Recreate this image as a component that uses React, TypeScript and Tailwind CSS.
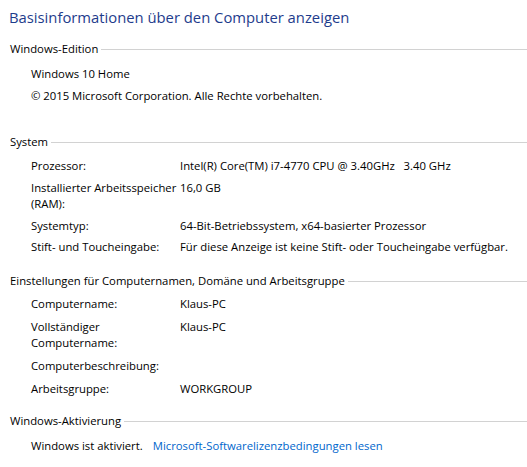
import type { ReactNode } from "react";

const font = { fontFamily: '"Open Sans", "Noto Sans", Arial, sans-serif' };

function SectionHeader({ title, className = "" }: { title: string; className?: string }) {
  return (
    <div className={`flex items-center leading-4 ${className}`}>
      <span className="pl-px">{title}</span>
      <div className="ml-[3px] mt-px h-px flex-1 bg-[#d2d2d2]" />
    </div>
  );
}

function Row({ label, children, className = "" }: { label: ReactNode; children?: ReactNode; className?: string }) {
  return (
    <div className={`grid grid-cols-[149px_1fr] pl-[22px] leading-4 ${className}`}>
      <div>{label}</div>
      <div className="whitespace-nowrap">{children}</div>
    </div>
  );
}

export default function App() {
  return (
    <div className="h-[467px] w-[527px] overflow-hidden bg-white pl-[9px] text-[11.3px] text-black" style={font}>
      <h1 className="mt-[7px] text-[14.8px] leading-5 text-[#1e3c8c]">
        Basisinformationen über den Computer anzeigen
      </h1>

      <SectionHeader title="Windows-Edition" className="mt-[14px]" />
      <div className="mt-[9px] pl-[22px] leading-4">Windows 10 Home</div>
      <div className="mt-[6px] pl-[22px] leading-4">
        © 2015 Microsoft Corporation. Alle Rechte vorbehalten.
      </div>

      <SectionHeader title="System" className="mt-[30px]" />
      <Row label="Prozessor:" className="mt-[8px]">
        Intel(R) Core(TM) i7-4770 CPU @ 3.40GHz&nbsp;&nbsp; 3.40 GHz
      </Row>
      <Row label={<>Installierter Arbeitsspeicher<br />(RAM):</>} className="mt-[6px]">
        16,0 GB
      </Row>
      <Row label="Systemtyp:" className="mt-[6px]">
        64-Bit-Betriebssystem, x64-basierter Prozessor
      </Row>
      <Row label="Stift- und Toucheingabe:" className="mt-[5px]">
        Für diese Anzeige ist keine Stift- oder Toucheingabe verfügbar.
      </Row>

      <SectionHeader title="Einstellungen für Computernamen, Domäne und Arbeitsgruppe" className="mt-[18px]" />
      <Row label="Computername:" className="mt-[7px]">
        Klaus-PC
      </Row>
      <Row label={<>Vollständiger<br />Computername:</>} className="mt-[7px]">
        Klaus-PC
      </Row>
      <Row label="Computerbeschreibung:" className="mt-[7px]" />
      <Row label="Arbeitsgruppe:" className="mt-[7px]">
        WORKGROUP
      </Row>

      <SectionHeader title="Windows-Aktivierung" className="mt-[16px]" />
      <div className="mt-[9px] flex gap-[10px] pl-[22px] leading-4">
        <span>Windows ist aktiviert.</span>
        <a className="text-[#0066cc]">Microsoft-Softwarelizenzbedingungen lesen</a>
      </div>
    </div>
  );
}
